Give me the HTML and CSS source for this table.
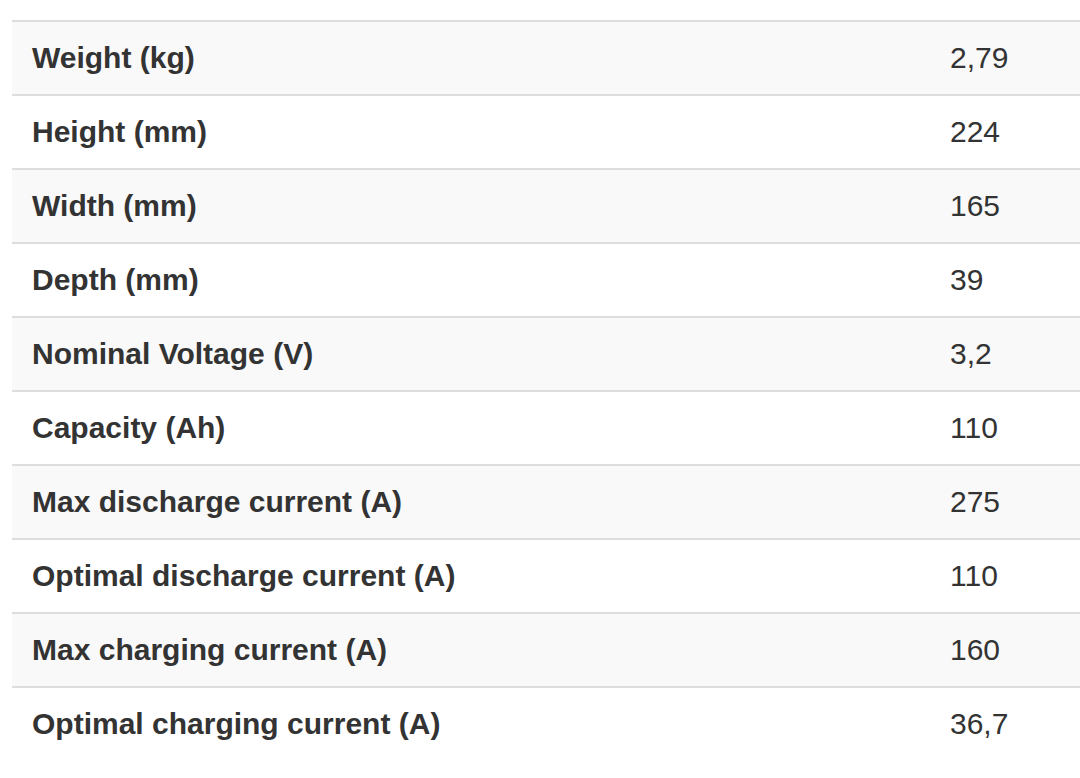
FILE: index.html
```html
<!DOCTYPE html>
<html>
<head>
<meta charset="utf-8">
<link rel="stylesheet" href="styles.css">
</head>
<body>
<div class="wrap">
<table class="specs">
<tbody>
<tr><th>Weight (kg)</th><td>2,79</td></tr>
<tr><th>Height (mm)</th><td>224</td></tr>
<tr><th>Width (mm)</th><td>165</td></tr>
<tr><th>Depth (mm)</th><td>39</td></tr>
<tr><th>Nominal Voltage (V)</th><td>3,2</td></tr>
<tr><th>Capacity (Ah)</th><td>110</td></tr>
<tr><th>Max discharge current (A)</th><td>275</td></tr>
<tr><th>Optimal discharge current (A)</th><td>110</td></tr>
<tr><th>Max charging current (A)</th><td>160</td></tr>
<tr><th>Optimal charging current (A)</th><td>36,7</td></tr>
</tbody>
</table>
</div>
</body>
</html>
```

FILE: styles.css
```css
html, body {
  margin: 0;
  padding: 0;
  background: #fff;
}
body {
  font-family: "Liberation Sans", Arial, Helvetica, sans-serif;
  color: #333;
  overflow: hidden;
}
.wrap {
  padding: 20px 0 0 12px;
}
.specs {
  border-collapse: separate;
  border-spacing: 0;
  width: 1100px;
  table-layout: fixed;
}
.specs tr:nth-child(odd) {
  background: #f9f9f9;
}
.specs th,
.specs td {
  box-sizing: content-box;
  height: 40px;
  padding: 16px 0 16px 20px;
  border-top: 2px solid #ddd;
  font-size: 30px;
  line-height: 40px;
  text-align: left;
  vertical-align: middle;
}
.specs th {
  font-weight: bold;
  width: 898px;
}
.specs td {
  font-weight: normal;
}
```
